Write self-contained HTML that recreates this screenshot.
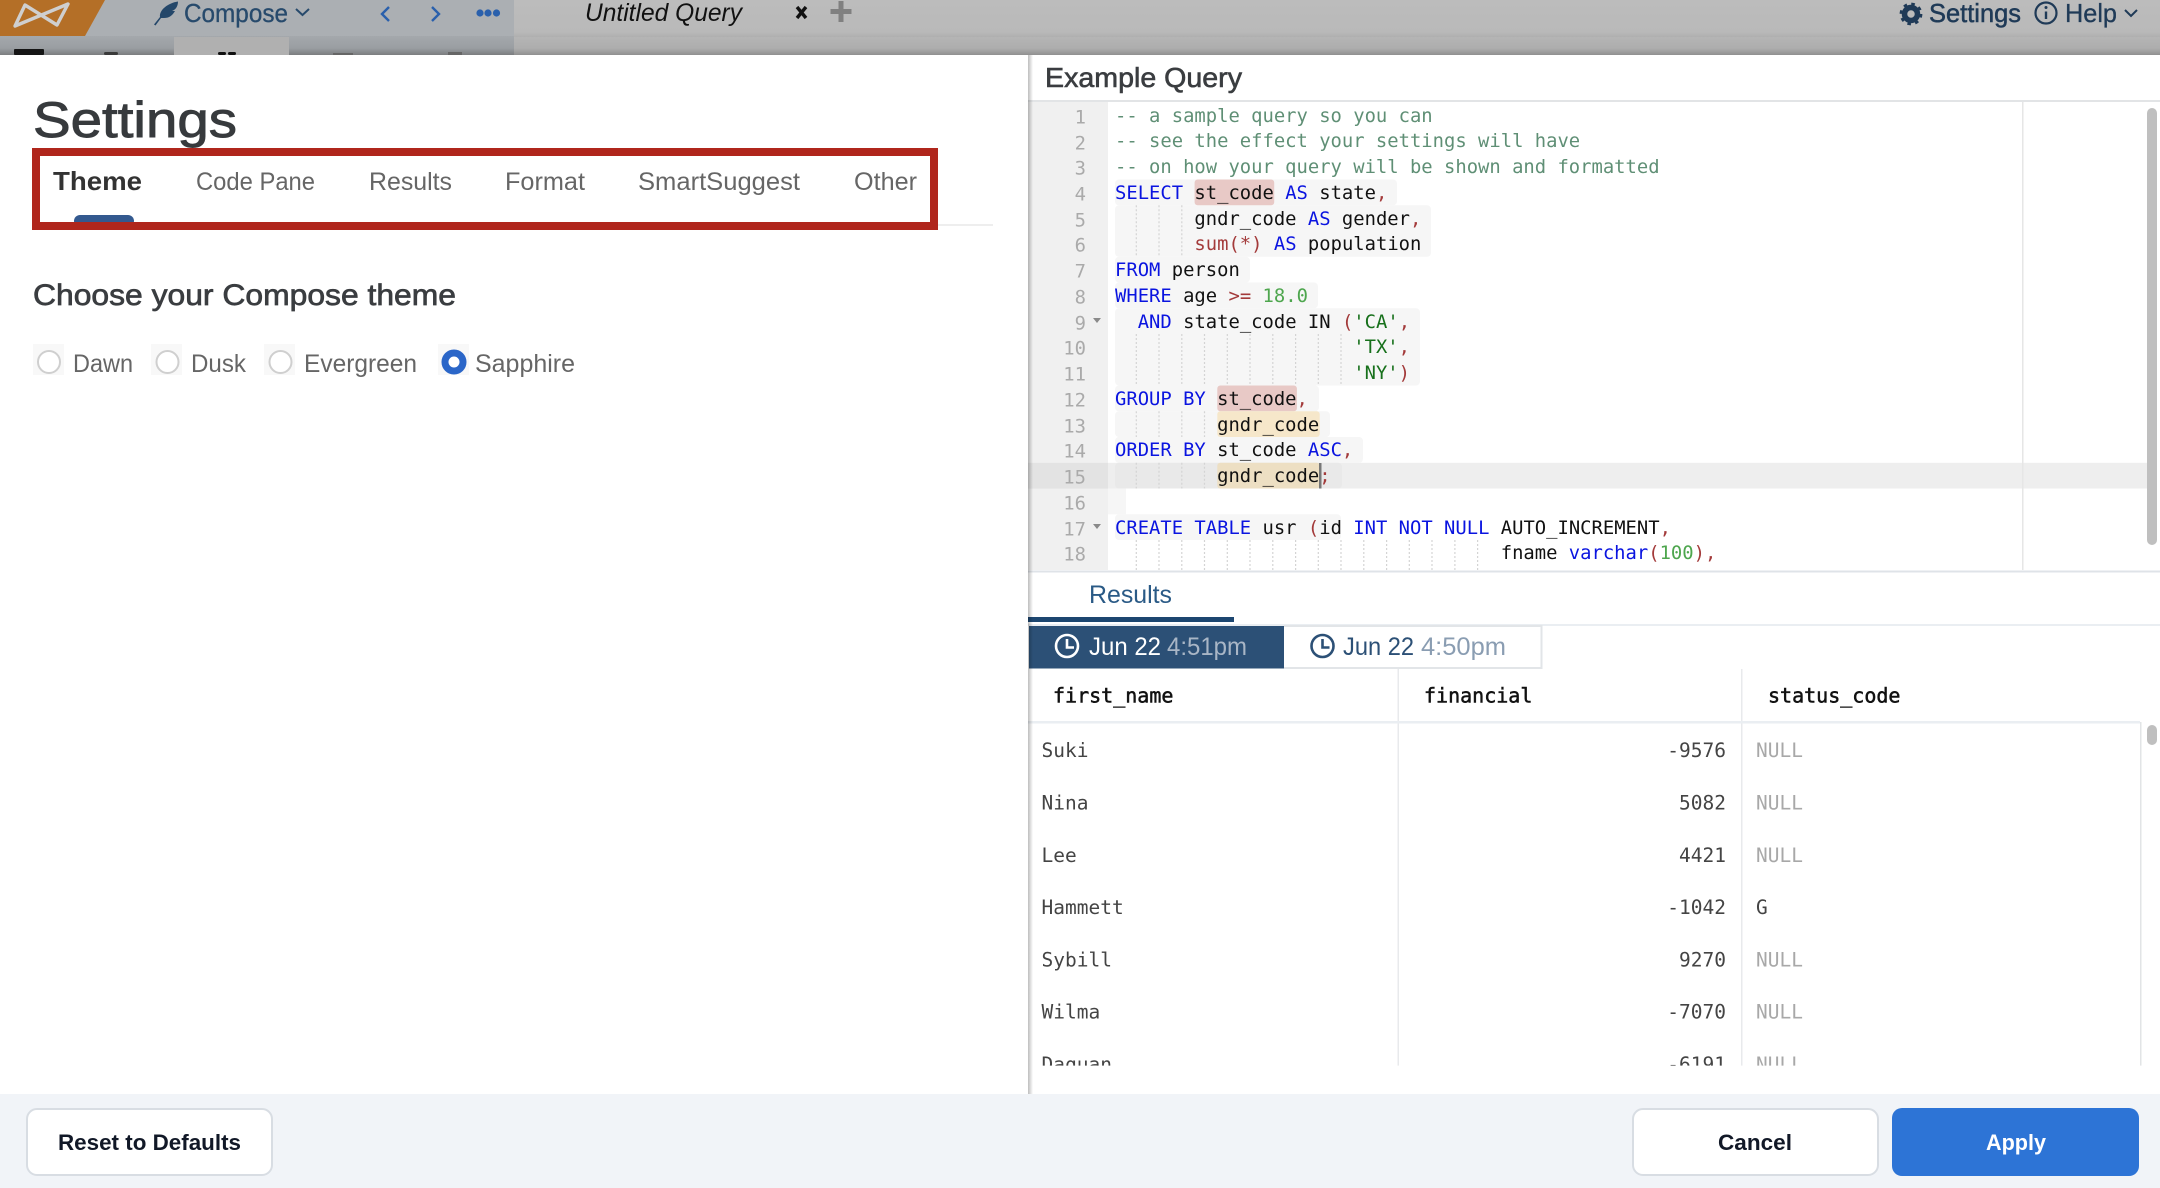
<!DOCTYPE html>
<html><head><meta charset="utf-8"><title>Settings</title>
<style>
html,body{margin:0;padding:0;background:#fff}
#r{position:relative;width:2160px;height:1188px;overflow:hidden;background:#fff}
svg{position:absolute;left:0;top:0}
text{font-family:"Liberation Sans",sans-serif}
.m{font-family:"DejaVu Sans Mono","Liberation Mono",monospace}
pre{position:absolute;margin:0;left:1115px;top:103.5px;height:466.5px;overflow:hidden;font:18.85px/25.75px "DejaVu Sans Mono","Liberation Mono",monospace;color:#111}
pre i{font-style:normal}
.c{color:#5f8f75}.k{color:#0a14e0}.p{color:#a33a3a}.s{color:#17701b}.n{color:#4ea64e}
</style></head><body><div id="r">
<svg width="2160" height="1188" viewBox="0 0 2160 1188">
<defs>
<linearGradient id="g1" x1="0" y1="0" x2="0" y2="1"><stop offset="0" stop-color="#a4a8ac"/><stop offset=".6" stop-color="#9a9ea2"/><stop offset="1" stop-color="#77797b"/></linearGradient>
<linearGradient id="g2" x1="0" y1="0" x2="0" y2="1"><stop offset="0" stop-color="#b5b5b5"/><stop offset=".6" stop-color="#adadad"/><stop offset="1" stop-color="#8c8c8c"/></linearGradient>
<linearGradient id="g3" x1="0" y1="0" x2="0" y2="1"><stop offset="0" stop-color="#bcbcbc"/><stop offset=".85" stop-color="#b9b9b9"/><stop offset="1" stop-color="#acacac"/></linearGradient>
<linearGradient id="g4" x1="0" y1="0" x2="1" y2="0"><stop offset="0" stop-color="#000" stop-opacity=".26"/><stop offset="1" stop-color="#000" stop-opacity="0"/></linearGradient>
<clipPath id="tb"><rect x="1028" y="722" width="1112" height="343.6"/></clipPath>
<clipPath id="ed"><rect x="1028" y="102" width="1132" height="468"/></clipPath>
</defs>

<!-- top bar -->
<rect x="0" y="0" width="514" height="36" fill="#abafb3"/>
<rect x="514" y="0" width="1646" height="38" fill="url(#g3)"/>
<rect x="0" y="36" width="514" height="20" fill="url(#g1)"/>
<rect x="514" y="37" width="1646" height="19" fill="url(#g2)"/>
<rect x="174" y="37" width="115" height="19" fill="#b0b0b0"/>
<rect x="14" y="49" width="30" height="6" rx="1" fill="#151515"/>
<rect x="104" y="52" width="14" height="3" rx="1.5" fill="#3a3a3a"/>
<rect x="218" y="52" width="8" height="3" rx="1.5" fill="#111"/><rect x="228" y="52" width="8" height="3" rx="1.5" fill="#111"/>
<rect x="333" y="53" width="20" height="2" fill="#666"/><rect x="448" y="52" width="14" height="3" fill="#666"/>
<polygon points="0,0 105,0 85,36 0,36" fill="#b46f27"/>
<path d="M25 5 L57 25 L68 4 L15 26 Z" fill="none" stroke="#cfcfcf" stroke-width="3.4" stroke-linejoin="round"/>
<path d="M154 24.500 L160 17 C159 10 168 3 178 1.500 C178 7 175 10 172 11 L175 11 C172 16 169 18 164 18 L161 18 L155.500 25.500 Z" fill="#24476a"/>
<text x="184" y="22" font-size="26" fill="#274a6c" stroke="#274a6c" stroke-width=".3" textLength="104" lengthAdjust="spacingAndGlyphs">Compose</text>
<path d="M296 9 L302.500 15 L309 9" fill="none" stroke="#274a6c" stroke-width="2"/>
<path d="M389 7 L382 14 L389 21" fill="none" stroke="#2a60ac" stroke-width="2.400"/>
<path d="M432 7 L439 14 L432 21" fill="none" stroke="#2a60ac" stroke-width="2.400"/>
<g fill="#2a60ac"><circle cx="480" cy="13" r="3.600"/><circle cx="488" cy="13" r="3.600"/><circle cx="496.500" cy="13" r="3.600"/></g>
<text x="585" y="21" font-size="25" font-style="italic" fill="#111" textLength="157" lengthAdjust="spacingAndGlyphs">Untitled Query</text>
<path d="M797 7 L806 18 M806 7 L797 18" stroke="#111" stroke-width="3.400"/>
<path d="M841 1 V22 M830.500 11.500 H851.500" stroke="#808080" stroke-width="5"/>
<circle cx="1911" cy="14" r="6.500" fill="none" stroke="#1f3a57" stroke-width="5.500"/>
<circle cx="1911" cy="14" r="10" fill="none" stroke="#1f3a57" stroke-width="2.800" stroke-dasharray="3.500 4.350"/>
<text x="1929" y="22" font-size="26" fill="#1f3a57" stroke="#1f3a57" stroke-width=".5" textLength="92" lengthAdjust="spacingAndGlyphs">Settings</text>
<circle cx="2046" cy="13" r="10.500" fill="none" stroke="#1f3a57" stroke-width="2.200"/>
<path d="M2046 11.500 V19" stroke="#1f3a57" stroke-width="2.400"/><circle cx="2046" cy="7.500" r="1.500" fill="#1f3a57"/>
<text x="2065" y="22" font-size="26" fill="#1f3a57" stroke="#1f3a57" stroke-width=".3" textLength="52" lengthAdjust="spacingAndGlyphs">Help</text>
<path d="M2125 10 L2131 16 L2137 10" fill="none" stroke="#1f3a57" stroke-width="2"/>

<!-- modal -->
<rect x="0" y="55" width="2160" height="1039" fill="#fff"/>

<!-- left -->
<text x="33" y="137" font-size="50" fill="#373a3d" stroke="#373a3d" stroke-width=".9" textLength="204" lengthAdjust="spacingAndGlyphs">Settings</text>
<rect x="36" y="224" width="957" height="2" fill="#eeeeee"/>
<rect x="74" y="215" width="60" height="12" rx="6" fill="#33598f"/>
<rect x="36" y="152" width="898" height="74" fill="none" stroke="#b0261c" stroke-width="8"/>
<text x="53" y="190" font-size="26" font-weight="700" fill="#333" textLength="89" lengthAdjust="spacingAndGlyphs">Theme</text>
<g font-size="25" fill="#666">
<text x="196" y="190" textLength="119" lengthAdjust="spacingAndGlyphs">Code Pane</text>
<text x="369" y="190" textLength="83" lengthAdjust="spacingAndGlyphs">Results</text>
<text x="505" y="190" textLength="80" lengthAdjust="spacingAndGlyphs">Format</text>
<text x="638" y="190" textLength="162" lengthAdjust="spacingAndGlyphs">SmartSuggest</text>
<text x="854" y="190" textLength="63" lengthAdjust="spacingAndGlyphs">Other</text>
</g>
<text x="33" y="305" font-size="30" fill="#3a3d40" stroke="#3a3d40" stroke-width=".7" textLength="423" lengthAdjust="spacingAndGlyphs">Choose your Compose theme</text>
<g fill="#f8f8f8"><rect x="33" y="344" width="31" height="31"/><rect x="151" y="344" width="31" height="31"/><rect x="264" y="344" width="31" height="31"/><rect x="438" y="344" width="31" height="31"/></g>
<g fill="#fff" stroke="#cfcfcf" stroke-width="2"><circle cx="49" cy="362" r="11"/><circle cx="167.500" cy="362" r="11"/><circle cx="280.500" cy="362" r="11"/></g>
<circle cx="454" cy="362" r="9" fill="#fff" stroke="#2b66c8" stroke-width="7"/>
<g font-size="25" fill="#666">
<text x="73" y="372" textLength="60" lengthAdjust="spacingAndGlyphs">Dawn</text>
<text x="191" y="372" textLength="55" lengthAdjust="spacingAndGlyphs">Dusk</text>
<text x="304" y="372" textLength="113" lengthAdjust="spacingAndGlyphs">Evergreen</text>
<text x="475" y="372" textLength="100" lengthAdjust="spacingAndGlyphs">Sapphire</text>
</g>

<!-- right head -->
<text x="1045" y="87" font-size="28" fill="#3a3d40" stroke="#3a3d40" stroke-width=".6" textLength="197" lengthAdjust="spacingAndGlyphs">Example Query</text>
<rect x="1028" y="100" width="1132" height="2" fill="#e2e4e6"/>

<!-- editor backgrounds -->
<g clip-path="url(#ed)">
<rect x="1028" y="102" width="80" height="468" fill="#f0f0f0"/>
<rect x="1108" y="462.800" width="1039" height="25.750" fill="#eeeeee"/>
<rect x="1028" y="462.800" width="80" height="25.750" fill="#e3e3e3"/>
<g fill="#f6f6f6">
<rect x="1115" y="179.500" width="282" height="25.750" rx="4"/>
<rect x="1115" y="205.300" width="316" height="51.500" rx="4"/>
<rect x="1115" y="256.800" width="135" height="25.750" rx="4"/>
<rect x="1115" y="282.500" width="203" height="25.750" rx="4"/>
<rect x="1115" y="308.300" width="305" height="77.250" rx="4"/>
<rect x="1115" y="385.500" width="204" height="25.750" rx="4"/>
<rect x="1115" y="411.300" width="215" height="25.750" rx="4"/>
<rect x="1115" y="437" width="248" height="25.750" rx="4"/>
<rect x="1108" y="488.500" width="18" height="25.750"/>
<rect x="1115" y="514.300" width="226" height="25.750" rx="4"/>
</g>
<rect x="1115" y="462.800" width="227" height="25.750" rx="4" fill="#e9e9e9"/>
<g fill="#e8c9c6"><rect x="1194.600" y="179.500" width="79.600" height="25.750" rx="3"/><rect x="1217.300" y="385.500" width="79.600" height="25.750" rx="3"/></g>
<rect x="1217.300" y="411.300" width="102.400" height="25.750" rx="3" fill="#f6e7ca"/>
<rect x="1217.300" y="462.800" width="102.400" height="25.750" rx="3" fill="#eddfc3"/>
<rect x="1319" y="463" width="2.500" height="25.500" fill="#777"/>
<path fill="none" stroke="#d4d4d4" stroke-width="1.200" stroke-dasharray="2 2" d="M1136.300 205.300V256.800M1159 205.300V256.800M1181.800 205.300V256.800
M1136.300 334V385.500M1159 334V385.500M1181.800 334V385.500M1204.500 334V385.500M1227.300 334V385.500M1250 334V385.500M1272.800 334V385.500M1295.600 334V385.500M1318.300 334V385.500M1341 334V385.500
M1136.300 411.300V437M1159 411.300V437M1181.800 411.300V437M1204.500 411.300V437
M1136.300 462.800V488.500M1159 462.800V488.500M1181.800 462.800V488.500M1204.500 462.800V488.500
M1136.300 540V570M1159 540V570M1181.800 540V570M1204.500 540V570M1227.300 540V570M1250 540V570M1272.800 540V570M1295.600 540V570M1318.300 540V570M1341 540V570M1363.800 540V570M1386.600 540V570M1409.300 540V570M1432 540V570M1454.900 540V570M1477.600 540V570"/>
<rect x="2022" y="102" width="1.500" height="468" fill="#e6e6e6"/>
<rect x="2147" y="108" width="10" height="437" rx="5" fill="#bfbfbf"/>
<g class="m" font-size="18.850" fill="#aaaaaa" text-anchor="end" transform="translate(0,1.300)">
<text class="m" x="1086" y="122">1</text><text class="m" x="1086" y="148">2</text><text class="m" x="1086" y="173">3</text><text class="m" x="1086" y="199">4</text><text class="m" x="1086" y="225">5</text><text class="m" x="1086" y="250">6</text><text class="m" x="1086" y="276">7</text><text class="m" x="1086" y="302">8</text><text class="m" x="1086" y="328">9</text><text class="m" x="1086" y="353">10</text><text class="m" x="1086" y="379">11</text><text class="m" x="1086" y="405">12</text><text class="m" x="1086" y="431">13</text><text class="m" x="1086" y="456">14</text><text class="m" x="1086" y="482">15</text><text class="m" x="1086" y="508">16</text><text class="m" x="1086" y="534">17</text><text class="m" x="1086" y="559">18</text>
</g>
<polygon points="1093,318 1101,318 1097,323" fill="#8a8a8a"/>
<polygon points="1093,524 1101,524 1097,529" fill="#8a8a8a"/>
</g>
<rect x="1028" y="570.500" width="1132" height="2" fill="#dfe3e8"/>

<!-- results -->
<text x="1089" y="603" font-size="25" fill="#2a5a86" textLength="83" lengthAdjust="spacingAndGlyphs">Results</text>
<rect x="1028" y="617" width="206" height="5" fill="#1c4670"/>
<rect x="1028" y="624" width="1132" height="2" fill="#eaeef2"/>
<rect x="1029" y="626" width="255" height="42.500" fill="#2c5076"/>
<path d="M1284 626 H1541.500 V668 H1284" fill="#fff" stroke="#e2e5e8" stroke-width="2"/>
<circle cx="1067" cy="646" r="11" fill="none" stroke="#fff" stroke-width="2.600"/>
<path d="M1067 639 V647.500 H1074" fill="none" stroke="#fff" stroke-width="2.600"/>
<circle cx="1322.500" cy="646" r="11" fill="none" stroke="#2c5076" stroke-width="2.600"/>
<path d="M1322.500 639 V647.500 H1329.500" fill="none" stroke="#2c5076" stroke-width="2.600"/>
<g font-size="25">
<text x="1089" y="655" fill="#fff" textLength="72" lengthAdjust="spacingAndGlyphs">Jun 22</text>
<text x="1167" y="655" fill="#a9b6c6" textLength="80" lengthAdjust="spacingAndGlyphs">4:51pm</text>
<text x="1343" y="655" fill="#2c5076" textLength="71" lengthAdjust="spacingAndGlyphs">Jun 22</text>
<text x="1421" y="655" fill="#8a9db2" textLength="85" lengthAdjust="spacingAndGlyphs">4:50pm</text>
</g>

<!-- table -->
<rect x="1397.500" y="669" width="1.500" height="396.600" fill="#e8eaec"/>
<rect x="1741" y="669" width="1.500" height="396.600" fill="#e8eaec"/>
<rect x="2140" y="722" width="1.500" height="343.600" fill="#e2e4e6"/>
<rect x="1028" y="721" width="1112" height="2.500" fill="#eaeef2"/>
<g font-size="20" fill="#111" stroke="#111" stroke-width=".5">
<text class="m" x="1053" y="702.500">first_name</text>
<text class="m" x="1424" y="702.500">financial</text>
<text class="m" x="1768" y="702.500">status_code</text>
</g>
<g clip-path="url(#tb)" font-size="19.500" fill="#444">
<text class="m" x="1041.500" y="757">Suki</text><text class="m" x="1041.500" y="809.500">Nina</text><text class="m" x="1041.500" y="861.800">Lee</text><text class="m" x="1041.500" y="914">Hammett</text><text class="m" x="1041.500" y="966.500">Sybill</text><text class="m" x="1041.500" y="1018.600">Wilma</text><text class="m" x="1041.500" y="1071">Daquan</text>
<g text-anchor="end"><text class="m" x="1726" y="757">-9576</text><text class="m" x="1726" y="809.500">5082</text><text class="m" x="1726" y="861.800">4421</text><text class="m" x="1726" y="914">-1042</text><text class="m" x="1726" y="966.500">9270</text><text class="m" x="1726" y="1018.600">-7070</text><text class="m" x="1726" y="1071">-6191</text></g>
<g fill="#a8a8a8"><text class="m" x="1756" y="757">NULL</text><text class="m" x="1756" y="809.500">NULL</text><text class="m" x="1756" y="861.800">NULL</text><text class="m" x="1756" y="914" fill="#444">G</text><text class="m" x="1756" y="966.500">NULL</text><text class="m" x="1756" y="1018.600">NULL</text><text class="m" x="1756" y="1071">NULL</text></g>
</g>
<rect x="2147" y="725" width="10" height="20" rx="5" fill="#bfbfbf"/>

<!-- panel edge shadow -->
<rect x="1028" y="55" width="5" height="1039" fill="url(#g4)"/>

<!-- footer -->
<rect x="0" y="1094" width="2160" height="94" fill="#f1f4f8"/>
<rect x="27" y="1109" width="245" height="66" rx="10" fill="#fff" stroke="#d8dde3" stroke-width="2"/>
<text x="58" y="1150" font-size="22" font-weight="700" fill="#111827" textLength="183" lengthAdjust="spacingAndGlyphs">Reset to Defaults</text>
<rect x="1633" y="1109" width="245" height="66" rx="10" fill="#fff" stroke="#d8dde3" stroke-width="2"/>
<text x="1718" y="1150" font-size="22" font-weight="700" fill="#111827" textLength="74" lengthAdjust="spacingAndGlyphs">Cancel</text>
<rect x="1892" y="1108" width="247" height="68" rx="10" fill="#2d74d6"/>
<text x="1986" y="1150" font-size="22" font-weight="700" fill="#fff" textLength="60" lengthAdjust="spacingAndGlyphs">Apply</text>
</svg>

<pre><i class="c">-- a sample query so you can</i>
<i class="c">-- see the effect your settings will have</i>
<i class="c">-- on how your query will be shown and formatted</i>
<i class="k">SELECT</i> st_code <i class="k">AS</i> state<i class="p">,</i>
       gndr_code <i class="k">AS</i> gender<i class="p">,</i>
       <i class="p">sum(*)</i> <i class="k">AS</i> population
<i class="k">FROM</i> person
<i class="k">WHERE</i> age <i class="p">&gt;=</i> <i class="n">18.0</i>
  <i class="k">AND</i> state_code IN <i class="p">(</i><i class="s">'CA'</i><i class="p">,</i>
                     <i class="s">'TX'</i><i class="p">,</i>
                     <i class="s">'NY'</i><i class="p">)</i>
<i class="k">GROUP BY</i> st_code<i class="p">,</i>
         gndr_code
<i class="k">ORDER BY</i> st_code <i class="k">ASC</i><i class="p">,</i>
         gndr_code<i class="p">;</i>

<i class="k">CREATE TABLE</i> usr <i class="p">(</i>id <i class="k">INT NOT NULL</i> AUTO_INCREMENT<i class="p">,</i>
                                  fname <i class="k">varchar</i><i class="p">(</i><i class="n">100</i><i class="p">),</i>
                                        lname <i class="k">varchar</i><i class="p">(</i><i class="n">100</i><i class="p">),</i></pre>
</div></body></html>
